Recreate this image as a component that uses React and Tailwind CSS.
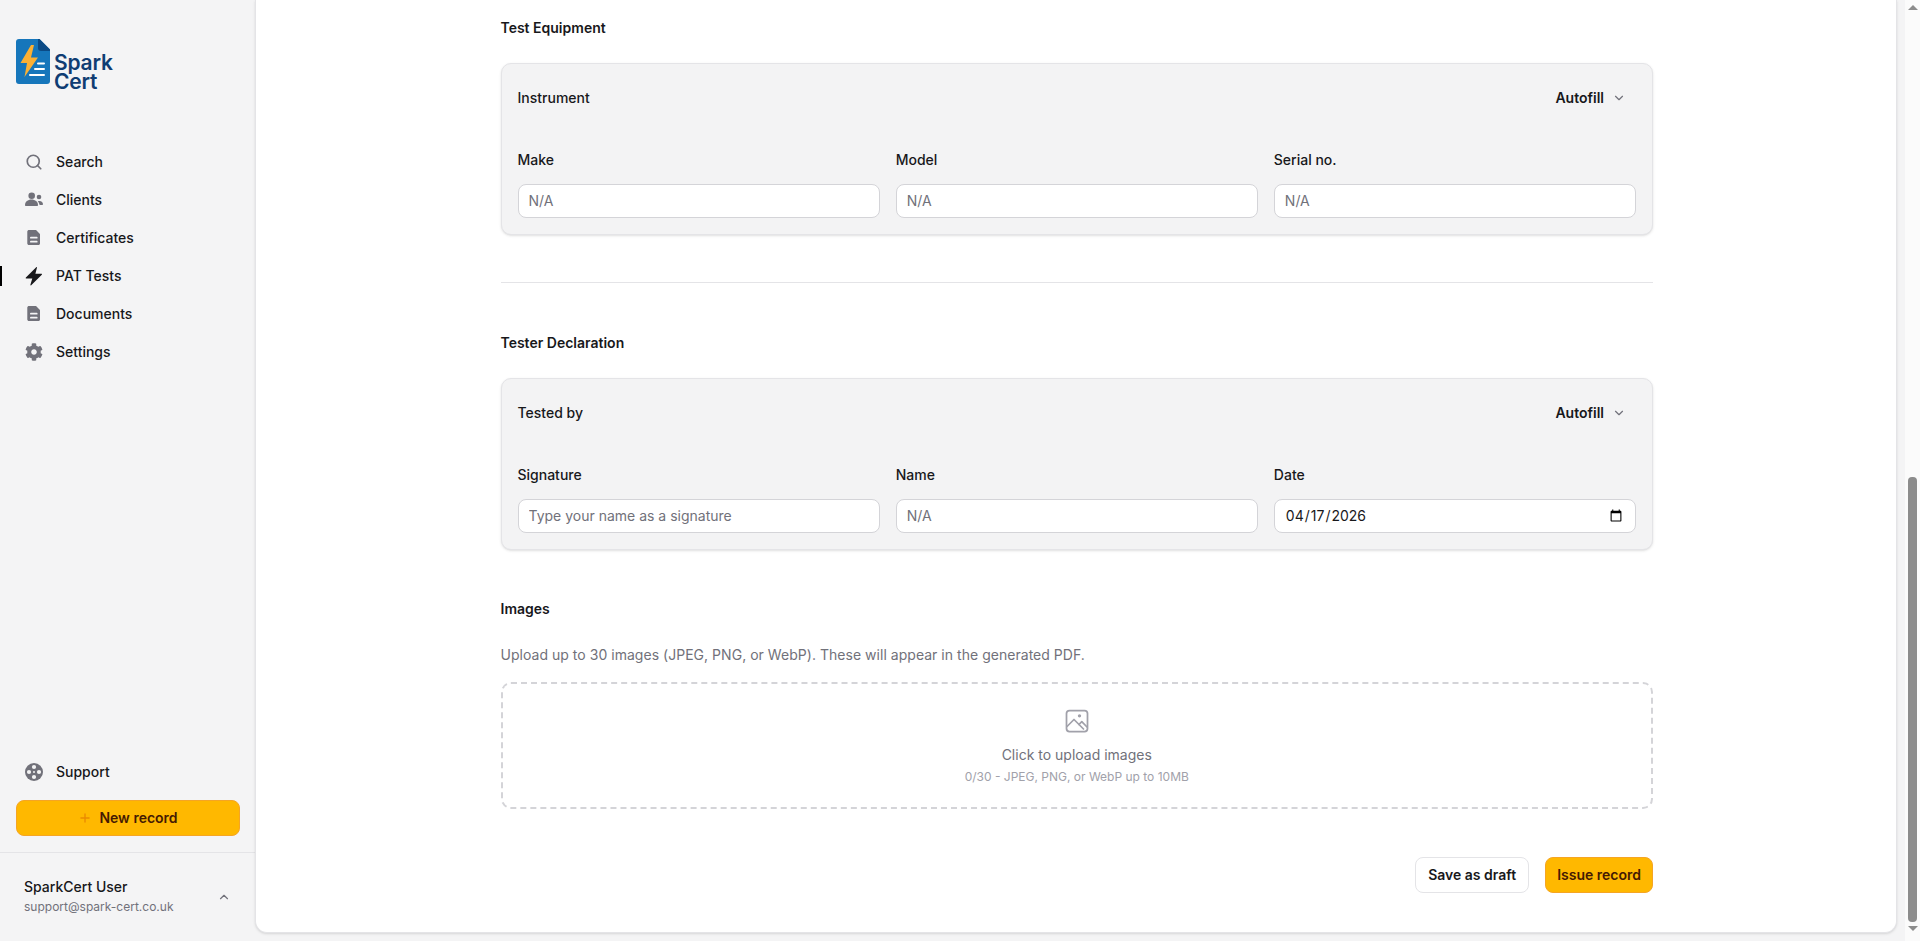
import { Search, Plus, ChevronDown, ChevronUp } from 'lucide-react'
import { FaCog } from 'react-icons/fa'

function UsersIcon({ className }) {
  return (
    <svg viewBox="0 0 20 20" className={className} fill="currentColor">
      <circle cx="7.7" cy="5.7" r="3.3" />
      <path d="M1 15c0-3.200 2.900-5.500 6.500-5.500S14 11.800 14 15c0 .6-.4 1-1 1H2c-.6 0-1-.4-1-1z" />
      <circle cx="15" cy="7" r="2.300" />
      <path d="M15.500 11c2.100 0 3.500 1.500 3.500 3.200 0 .5-.3.800-.8.800h-2.600c-.2-1.500-.9-2.800-1.900-3.800.5-.1 1.100-.2 1.800-.2z" />
    </svg>
  )
}

function DocIcon({ className }) {
  return (
    <svg viewBox="0 0 20 20" className={className}>
      <path
        fill="currentColor"
        d="M5 2h6.500c.3 0 .6.100.8.300l3.400 3.400c.2.200.3.500.3.800v9c0 .9-.7 1.500-1.500 1.500H5c-.9 0-1.700-.7-1.700-1.500v-12C3.300 2.700 4.100 2 5 2z"
      />
      <path d="M6.900 9.700h5.800M6.900 13.700h5.800" stroke="#f4f4f5" strokeWidth="1.800" strokeLinecap="round" />
    </svg>
  )
}

function BoltIcon({ className }) {
  return (
    <svg viewBox="0 0 20 20" className={className} fill="currentColor">
      <path d="M12.200 1.200 1.900 11.600c-.4.400-.1 1 .4 1h6l-1.900 6.200c-.1.500.5.800.8.400L17.800 8.800c.4-.4.100-1-.4-1h-6l1.600-6.200c.1-.5-.5-.8-.8-.4z" />
    </svg>
  )
}

function SupportIcon({ className }) {
  return (
    <svg viewBox="0 0 20 20" className={className}>
      <circle cx="10" cy="10" r="9" fill="currentColor" />
      <circle cx="10" cy="5" r="2.100" fill="#f4f4f5" />
      <circle cx="10" cy="15" r="2.100" fill="#f4f4f5" />
      <circle cx="5" cy="10" r="2.100" fill="#f4f4f5" />
      <circle cx="15" cy="10" r="2.100" fill="#f4f4f5" />
      <circle cx="10" cy="10" r="1" fill="#f4f4f5" />
    </svg>
  )
}

function UploadImageIcon({ className }) {
  return (
    <svg
      viewBox="0 0 24 24"
      className={className}
      fill="none"
      stroke="currentColor"
      strokeWidth="1.750"
      strokeLinecap="round"
      strokeLinejoin="round"
    >
      <rect x="1.500" y="1.500" width="21" height="21" rx="3" />
      <circle cx="14.500" cy="6.800" r=".8" />
      <path d="M2 17.500 9 10.500 18.500 20" />
      <path d="M14 15.500l2.800-2.800L22 18" />
    </svg>
  )
}

function Logo() {
  return (
    <div className="flex items-end">
      <svg viewBox="0 0 34 45" className="w-[34px] h-[45px] shrink-0">
        <path fill="#1676bb" d="M3 0h20.500L34 10.500V42a3 3 0 0 1-3 3H3a3 3 0 0 1-3-3V3a3 3 0 0 1 3-3z" />
        <path fill="#0b4a85" d="M22 0h1.500L34 10.500V12H25a3 3 0 0 1-3-3z" />
        <path fill="#fbb034" d="M15 6 4.500 24H11L8.500 38 22 18.500h-7L18 6z" />
        <path d="M22 24.500h6M19 30h9M14 36h14" stroke="#fff" strokeWidth="2" strokeLinecap="round" />
      </svg>
      <div className="ml-[4px] -mb-[7px] w-[60px] text-[21px] leading-[19px] font-semibold tracking-[-0.2px] text-[#0f3d73]">
        Spark Cert
      </div>
    </div>
  )
}

function SearchIcon({ className }) {
  return <Search className={className} strokeWidth={2.25} />
}

const NAV_ITEMS = [
  { label: 'Search', icon: SearchIcon, iconClass: 'w-[18px] h-[18px] text-[#71717a]' },
  { label: 'Clients', icon: UsersIcon, iconClass: 'w-[20px] h-[20px] text-[#71717a]' },
  { label: 'Certificates', icon: DocIcon, iconClass: 'w-[20px] h-[20px] text-[#71717a]' },
  { label: 'PAT Tests', icon: BoltIcon, iconClass: 'w-[20px] h-[20px] text-[#18181b]', active: true },
  { label: 'Documents', icon: DocIcon, iconClass: 'w-[20px] h-[20px] text-[#71717a]' },
  { label: 'Settings', icon: FaCog, iconClass: 'w-[18px] h-[18px] text-[#71717a]' },
]

function NavItem({ label, icon: Icon, iconClass, active }) {
  return (
    <div className="relative h-[38px] flex items-center pl-[24px]">
      {active && <span className="absolute left-0 top-[9px] h-[20px] w-[2px] bg-black" />}
      <span className="w-[20px] flex justify-center">
        <Icon className={iconClass} />
      </span>
      <span className="ml-[12px] text-sm font-medium text-[#18181b]">{label}</span>
    </div>
  )
}

function Sidebar() {
  return (
    <aside className="w-[255px] shrink-0 flex flex-col">
      <div className="pl-[16px] pt-[39px]">
        <Logo />
      </div>
      <nav className="mt-[59px]">
        {NAV_ITEMS.map((item) => (
          <NavItem key={item.label} {...item} />
        ))}
      </nav>
      <div className="mt-auto">
        <NavItem label="Support" icon={SupportIcon} iconClass="w-[20px] h-[20px] text-[#71717a]" />
        <div className="pl-[16px] pr-[15px] mt-[9px]">
          <button className="w-full h-[36px] rounded-lg border border-[#f5a524] bg-[#ffb800] flex items-center justify-center gap-[7px] text-sm font-semibold text-[#451a03]">
            <Plus className="w-[14px] h-[14px] text-[#ea8a00]" strokeWidth={2.25} />
            New record
          </button>
        </div>
        <div className="mt-[16px] h-[89px] border-t border-[#e4e4e7] pl-[24px] pr-[24px] flex items-center justify-between">
          <div className="-mt-[2px]">
            <div className="text-sm leading-[21px] font-medium text-[#18181b]">SparkCert User</div>
            <div className="mt-[1px] text-xs leading-[18px] text-[#71717a]">support@spark-cert.co.uk</div>
          </div>
          <ChevronUp className="w-[14px] h-[14px] text-[#71717a]" />
        </div>
      </div>
    </aside>
  )
}

function Field({ label, placeholder, type = 'text', defaultValue }) {
  return (
    <div>
      <div className="text-sm leading-[20px] font-medium text-[#18181b] mb-[14px]">{label}</div>
      <input
        type={type}
        placeholder={placeholder}
        defaultValue={defaultValue}
        className={
          type === 'date'
            ? 'block w-full h-[34px] rounded-lg border border-[#d4d4d8] bg-white px-[10px] text-sm text-[#18181b] outline-none'
            : 'block w-full h-[34px] rounded-lg border border-[#d4d4d8] bg-white px-[10px] pb-[1px] text-sm text-[#18181b] placeholder:text-[#71717a] outline-none'
        }
      />
    </div>
  )
}

function Panel({ title, fields }) {
  return (
    <div className="rounded-[10px] border border-[#e4e4e7] bg-[#f3f3f4] shadow-sm p-4">
      <div className="h-[36px] flex items-center justify-between">
        <span className="text-sm font-medium text-[#18181b]">{title}</span>
        <button className="flex items-center gap-[8px] mr-[10px] text-sm font-semibold text-[#18181b]">
          Autofill
          <ChevronDown className="w-[14px] h-[14px] text-[#71717a]" />
        </button>
      </div>
      <div className="mt-[34px] grid grid-cols-3 gap-4">
        {fields.map((f) => (
          <Field key={f.label} {...f} />
        ))}
      </div>
    </div>
  )
}

function SectionTitle({ children }) {
  return <h2 className="text-sm leading-[20px] font-semibold text-[#18181b]">{children}</h2>
}

function Scrollbar() {
  return (
    <div className="w-[15px] shrink-0 ml-[8px] bg-[#fbfbfb] flex flex-col items-center">
      <div className="mt-[5px] w-0 h-0 border-x-[5px] border-x-transparent border-b-[5px] border-b-[#8c8c8c]" />
      <div className="mt-[467px] w-[9px] h-[445px] rounded-[4px] bg-[#8c8c8c]" />
      <div className="mt-[4px] w-0 h-0 border-x-[5px] border-x-transparent border-t-[5px] border-t-[#8c8c8c]" />
    </div>
  )
}

export default function App() {
  return (
    <div className="h-[941px] flex overflow-hidden bg-[#f4f4f5] font-['Inter',sans-serif]">
      <Sidebar />
      <main className="flex-1 mb-[8px] pl-[1.5px] bg-white rounded-b-xl border-x border-b border-[#e4e4e7] shadow-sm">
        <div className="w-[1152.5px] mx-auto pt-[18px]">
          <SectionTitle>Test Equipment</SectionTitle>
          <div className="mt-[25px]">
            <Panel
              title="Instrument"
              fields={[
                { label: 'Make', placeholder: 'N/A' },
                { label: 'Model', placeholder: 'N/A' },
                { label: 'Serial no.', placeholder: 'N/A' },
              ]}
            />
          </div>
          <div className="mt-[47px] border-t border-[#e4e4e7]" />
          <div className="mt-[50px]">
            <SectionTitle>Tester Declaration</SectionTitle>
          </div>
          <div className="mt-[25px]">
            <Panel
              title="Tested by"
              fields={[
                { label: 'Signature', placeholder: 'Type your name as a signature' },
                { label: 'Name', placeholder: 'N/A' },
                { label: 'Date', type: 'date', defaultValue: '2026-04-17' },
              ]}
            />
          </div>
          <div className="mt-[49px]">
            <SectionTitle>Images</SectionTitle>
          </div>
          <p className="mt-[26px] text-sm leading-[20px] tracking-[0.03px] text-[#71717a]">
            Upload up to 30 images (JPEG, PNG, or WebP). These will appear in the generated PDF.
          </p>
          <div className="mt-[17px] h-[127px] rounded-[10px] border-2 border-dashed border-[#d4d4d8] flex flex-col items-center pt-[25px]">
            <UploadImageIcon className="w-[24px] h-[24px] text-[#a1a1aa]" />
            <div className="mt-[12px] text-sm leading-[20px] text-[#71717a]">Click to upload images</div>
            <div className="mt-[4px] text-xs leading-[16px] text-[#a1a1aa]">0/30 - JPEG, PNG, or WebP up to 10MB</div>
          </div>
          <div className="mt-[48px] flex justify-end gap-[16px]">
            <button className="h-[36px] px-[12px] rounded-lg border border-[#e4e4e7] bg-white text-sm font-semibold text-[#18181b]">
              Save as draft
            </button>
            <button className="h-[36px] px-[11px] rounded-lg border border-[#f5a524] bg-[#ffb800] text-sm font-semibold text-[#451a03]">
              Issue record
            </button>
          </div>
        </div>
      </main>
      <Scrollbar />
    </div>
  )
}
